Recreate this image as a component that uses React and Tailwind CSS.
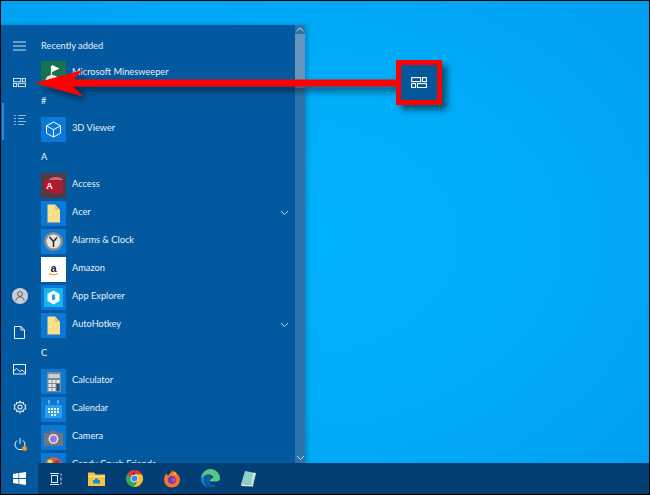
import React from "react";

const font = { fontFamily: 'Lato,"Open Sans",sans-serif' };

function Folder() {
  return (
    <svg width="25" height="25" viewBox="0 0 25 25">
      <rect width="25" height="25" fill="#0a78d6" />
      <path d="M6.500 3.500h7.500l5 5.500v12.500H6.500z" fill="#fbe08c" />
      <path d="M14 3.500l5 5.500h-5z" fill="#e9c565" />
    </svg>
  );
}
function Cube() {
  return (
    <svg width="25" height="25" viewBox="0 0 25 25" fill="none" stroke="#fff" strokeWidth="1">
      <rect width="25" height="25" fill="#0a78d6" stroke="none" />
      <path d="M12.500 5l7 3.800v7.400l-7 3.800-7-3.800V8.800zM5.500 8.800l7 3.900 7-3.900M12.500 12.700V20" />
    </svg>
  );
}
function AccessIcon() {
  return (
    <svg width="25" height="25" viewBox="0 0 25 25">
      <rect width="25" height="25" fill="#523a42" />
      <ellipse cx="15" cy="7" rx="7" ry="3" fill="#d9647a" />
      <path d="M8 7h14v11c0 2-3.500 3-7 3s-7-1-7-3z" fill="#a81c34" />
      <rect x="3" y="7" width="11" height="11" fill="#b7162e" />
      <text x="8.500" y="16" fontSize="9" fontWeight="700" fill="#fff" textAnchor="middle" fontFamily="Liberation Sans">A</text>
    </svg>
  );
}
function ClockIcon() {
  return (
    <svg width="25" height="25" viewBox="0 0 25 25">
      <rect width="25" height="25" fill="#0a78d6" />
      <circle cx="12.500" cy="12.500" r="9.500" fill="#8a8d90" />
      <circle cx="12.500" cy="12.500" r="7" fill="#e4e4e0" />
      <path d="M8.500 8l4 4.500 3.500-4M12.500 12.500V18" stroke="#2a2a2a" strokeWidth="1.500" fill="none" />
    </svg>
  );
}
function AmazonIcon() {
  return (
    <svg width="25" height="25" viewBox="0 0 25 25">
      <rect width="25" height="25" fill="#fff" />
      <text x="12.500" y="14.500" fontSize="11" fontWeight="700" fill="#222" textAnchor="middle" fontFamily="Liberation Sans">a</text>
      <path d="M8 16.500c3 1.800 6 1.800 9 0" stroke="#f39a1f" strokeWidth="1.200" fill="none" />
    </svg>
  );
}
function ExplorerIcon() {
  return (
    <svg width="25" height="25" viewBox="0 0 25 25">
      <rect width="25" height="25" fill="#0a78d6" />
      <rect x="3" y="3" width="19" height="19" fill="#18b4ee" />
      <path d="M12.500 5.500l6 3.500v7l-6 3.500-6-3.500V9z" fill="#fff" />
      <path d="M11 9.500h2.500l1 1.500-1 1 1 1.200-1 1.800H11z" fill="#18a5e4" />
    </svg>
  );
}
function CalcIcon() {
  return (
    <svg width="25" height="25" viewBox="0 0 25 25">
      <rect width="25" height="25" fill="#0a78d6" />
      <rect x="6" y="3" width="14" height="20" fill="#7d8a94" />
      <rect x="7.500" y="5" width="11" height="4" fill="#c3d3dc" />
      <path d="M7.500 11h3v3h-3zM11.500 11h3v3h-3zM7.500 15h3v3h-3zM11.500 15h3v3h-3zM7.500 19h3v3h-3zM11.500 19h3v3h-3z" fill="#e6ebee" />
      <rect x="15.500" y="15" width="3" height="7" fill="#1f4d86" />
      <rect x="15.500" y="11" width="3" height="3" fill="#e6ebee" />
    </svg>
  );
}
function CalendarIcon() {
  return (
    <svg width="25" height="25" viewBox="0 0 25 25">
      <rect width="25" height="25" fill="#0a78d6" />
      <rect x="4" y="5" width="17" height="16" fill="#2aa0ec" />
      <path d="M4 5h17v3H4z" fill="#1175c9" />
      <path d="M8 3v4M17 3v4" stroke="#bfe0f6" strokeWidth="1" />
      <path d="M7 11h2v2H7zM10 11h2v2h-2zM13 11h2v2h-2zM16 11h2v2h-2zM7 14h2v2H7zM10 14h2v2h-2zM13 14h2v2h-2zM16 14h2v2h-2zM10 17h2v2h-2zM13 17h2v2h-2z" fill="#eaf6fe" />
    </svg>
  );
}
function CameraIcon() {
  return (
    <svg width="25" height="25" viewBox="0 0 25 25">
      <rect width="25" height="25" fill="#0a78d6" />
      <path d="M3 8h5l2-2.500h5L17 8h5v13H3z" fill="#70757c" />
      <circle cx="12.500" cy="14" r="5" fill="#e8e8ee" />
      <circle cx="12.500" cy="14" r="3.500" fill="#9a76e0" />
    </svg>
  );
}
function MineIcon() {
  return (
    <svg width="25" height="25" viewBox="0 0 25 25">
      <rect width="25" height="25" fill="#17734e" />
      <path d="M10.500 5v11" stroke="#fff" strokeWidth="1.200" />
      <path d="M11 4l7.500 3.500L11 11z" fill="#fff" />
      <path d="M4.500 20c0-4 3-6 6.500-6s6.500 2 6.500 6z" fill="#dfe9df" />
    </svg>
  );
}
function CandyIcon() {
  return (
    <svg width="25" height="25" viewBox="0 0 25 25">
      <rect width="25" height="25" fill="#0a78d6" />
      <circle cx="12.500" cy="13" r="9" fill="#c46b3b" />
      <circle cx="9" cy="9" r="2.500" fill="#f4d35e" />
      <circle cx="16" cy="10" r="3" fill="#c52a55" />
      <circle cx="10" cy="16" r="3" fill="#3ca14e" />
    </svg>
  );
}

function Chevron() {
  return (
    <svg width="9" height="6" viewBox="0 0 9 6" fill="none" stroke="#bcd8ec" strokeWidth="1">
      <path d="M1 1l3.500 3.500L8 1" />
    </svg>
  );
}

function Row({ icon, label, chevron }) {
  return (
    <div className="flex h-[28px] shrink-0 items-center">
      <div className="h-[25px] w-[25px] shrink-0">{icon}</div>
      <span className="ml-[6px] flex-1 whitespace-nowrap pb-[2px] text-[9.25px] text-[#e6f1f9]">{label}</span>
      {chevron && (
        <span className="mr-[6px] flex">
          <Chevron />
        </span>
      )}
    </div>
  );
}

function Head({ children, first }) {
  return (
    <div className={`flex shrink-0 items-center text-[9.25px] text-[#e6f1f9] ${first ? "h-[26px]" : "h-[28px]"}`}>
      {children}
    </div>
  );
}

function Tiles({ stroke = "#e8f2fa", size = 13 }) {
  return (
    <svg width={size} height={size * 0.7} viewBox="0 0 16 11.200" fill="none" stroke={stroke} strokeWidth="1.100">
      <rect x="0.600" y="0.600" width="9" height="4" />
      <rect x="11.500" y="0.600" width="3.900" height="4" />
      <rect x="0.600" y="6.600" width="3.900" height="4" />
      <rect x="6.500" y="6.600" width="8.900" height="4" />
    </svg>
  );
}

const rail = "flex h-[37px] w-full items-center justify-center";

function Rail() {
  return (
    <div className="relative flex h-full w-[37px] shrink-0 flex-col">
      <div className="absolute left-[1px] top-[78px] h-[37px] w-[2px] bg-[#1c8fe6]" />
      <div className="flex h-[42px] items-center justify-center">
        <svg width="13" height="10" viewBox="0 0 13 10" stroke="#cfe2f1" strokeWidth="1">
          <path d="M0 1h13M0 5h13M0 9h13" />
        </svg>
      </div>
      <div className="flex h-[32px] items-center justify-center">
        <Tiles />
      </div>
      <div className="flex h-[42px] items-center justify-center">
        <svg width="12" height="13" viewBox="0 0 12 13" stroke="#8fbad9" strokeWidth="1" fill="none">
          <path d="M0 1.500h2M0 4.500h2M0 7.500h2M0 10.500h2M4 1.500h8M4 4.500h6M4 7.500h8M4 10.500h6" />
        </svg>
      </div>
      <div className="flex-1" />
      <div className={rail}>
        <svg width="16" height="16" viewBox="0 0 16 16" fill="none">
          <circle cx="8" cy="8" r="8" fill="#c9cdd0" />
          <circle cx="8" cy="6" r="2.400" stroke="#55606a" strokeWidth="1" />
          <path d="M3.800 12.500c.6-2.500 2.200-3.600 4.200-3.600s3.600 1.100 4.200 3.600" stroke="#55606a" strokeWidth="1" />
        </svg>
      </div>
      <div className={rail}>
        <svg width="11" height="13" viewBox="0 0 11 13" fill="none" stroke="#e8f2fa" strokeWidth="1">
          <path d="M.5.500h6.500l3.500 3.500v8.500H.5zM7 .5V4h3.500" />
        </svg>
      </div>
      <div className={rail}>
        <svg width="13" height="11" viewBox="0 0 13 11" fill="none" stroke="#e8f2fa" strokeWidth="1">
          <rect x=".5" y=".5" width="12" height="9.500" />
          <path d="M.5 7l3-2.500 3.500 3 2-1.500 3.500 3" />
        </svg>
      </div>
      <div className={rail}>
        <svg width="14" height="14" viewBox="0 0 24 24" fill="none" stroke="#e8f2fa" strokeWidth="1.800">
          <circle cx="12" cy="12" r="3.500" />
          <path d="M12 2l2 3 3.500-.8 1 3.400 3.300 1.200-1 3.200 1 3.200-3.300 1.200-1 3.400-3.500-.8-2 3-2-3-3.500.8-1-3.400-3.300-1.200 1-3.200-1-3.200 3.300-1.200 1-3.400 3.500.8z" />
        </svg>
      </div>
      <div className="relative flex h-[38px] w-full items-center justify-center">
        <svg width="12" height="13" viewBox="0 0 12 13" fill="none" stroke="#e8f2fa" strokeWidth="1">
          <path d="M6 0v6M3.200 2.500a5 5 0 1 0 5.600 0" />
        </svg>
        <span className="absolute left-[21px] top-[21px] h-[5px] w-[5px] rounded-full bg-[#f7931e]" />
      </div>
    </div>
  );
}

function Scrollbar() {
  return (
    <div className="flex h-full w-[10px] shrink-0 flex-col bg-[#2a74ab]">
      <div className="flex h-[9px] items-center justify-center">
        <svg width="8" height="5" viewBox="0 0 8 5" fill="none" stroke="#b9d3e6" strokeWidth="1">
          <path d="M.5 4L4 1l3.500 3" />
        </svg>
      </div>
      <div className="h-[54px] bg-[#6596bd]" />
      <div className="flex-1" />
      <div className="flex h-[11px] items-center justify-center">
        <Chevron />
      </div>
    </div>
  );
}

function Windows() {
  return (
    <svg width="13" height="13" viewBox="0 0 13 13" fill="#fff">
      <path d="M0 1.900l5.500-.8v5H0zM6.200 1l6.800-1v6.100H6.200zM0 6.900h5.500v5L0 11.100zM6.200 6.900H13V13l-6.800-1z" />
    </svg>
  );
}

function Taskbar() {
  return (
    <div className="flex h-[31px] shrink-0 items-center bg-[#033f75]">
      <div className="flex h-full w-[37px] items-center justify-center bg-[#03579a]">
        <Windows />
      </div>
      <div className="flex w-[36px] justify-center">
        <svg width="14" height="12" viewBox="0 0 14 12" fill="none" stroke="#dbe6ef" strokeWidth="1">
          <rect x="2.500" y="2.500" width="6" height="7" />
          <path d="M1 .5h9M1 11.500h9M12 .5v2M12 4.500v3M12 9.500v2" />
        </svg>
      </div>
      <div className="ml-[3px] flex w-[38px] justify-center">
        <svg width="17" height="14" viewBox="0 0 17 14">
          <path d="M0 .5h6l1.500 2H17V14H0z" fill="#f4c542" />
          <path d="M0 4h17v1H0z" fill="#fde58a" />
          <rect x="5" y="8" width="7" height="3.500" fill="#1b88d4" />
          <rect x="7" y="6.500" width="3" height="2" fill="#1b88d4" />
        </svg>
      </div>
      <div className="flex w-[38px] justify-center">
        <svg width="17" height="17" viewBox="0 0 24 24">
          <path d="M12 12L12 0A12 12 0 0 1 22.400 6z" fill="#e53935" />
          <path d="M12 0A12 12 0 0 0 1.600 6L7 15z" fill="#e53935" />
          <path d="M1.600 6A12 12 0 0 0 11 24l5-9z" fill="#3aa757" />
          <path d="M22.400 6H12l4.500 9L11 24A12 12 0 0 0 22.400 6z" fill="#fbc02d" />
          <circle cx="12" cy="12" r="5.400" fill="#fff" />
          <circle cx="12" cy="12" r="4.300" fill="#3f83e6" />
        </svg>
      </div>
      <div className="flex w-[38px] justify-center">
        <svg width="18" height="18" viewBox="0 0 18 18">
          <path d="M9.500 0l1.800 3C14.500 3.500 17 6 17 9.500 17 14 13.500 17.500 9 17.500S1 14 1 9.500C1 7 2 5 3.500 3.500L5 6c1-1.500 3-3 4.500-6z" fill="#f6762a" />
          <path d="M11 1l3 3-3 1z" fill="#fcc419" />
          <circle cx="9" cy="10" r="4" fill="#6d3db5" />
          <circle cx="10.500" cy="10" r="2" fill="#d9478f" />
        </svg>
      </div>
      <div className="flex w-[38px] justify-center">
        <svg width="19" height="19" viewBox="0 0 19 19">
          <path d="M9.500 0a9.500 9.500 0 0 1 9.500 9.500c0 1.800-1.500 3-4 3H9c0-2.500 2-4 3.500-3.500C11.500 6 9 5 6.500 5.500 3.500 6 1 8 0 10 0 4.500 4.200 0 9.500 0z" fill="#58c785" />
          <path d="M0 10c1-2 3.500-4 6.500-4.500C3 7 2.500 12 4.500 15.500c1.500 2.500 4 3.500 6.500 3.500C5 19 .3 15.500 0 10z" fill="#137fd0" />
          <path d="M6.500 5.500C4 7.500 3.500 12 5.500 15c1.500 2.300 5 4 8.500 2.500l1-2c-2 1-5.500 1-6.500-1.500C8 12.800 8.500 11 10 10l-.7-4z" fill="#0e5ea8" />
        </svg>
      </div>
      <div className="flex w-[38px] justify-center">
        <svg width="17" height="17" viewBox="0 0 17 17">
          <path d="M5 1l11 2-3 12-12-1z" fill="#8fd0c5" />
          <path d="M13 3l3 0-3 12-2-.3z" fill="#d7ddd4" />
          <path d="M1 14l12 1 .5 1.500L1.500 16z" fill="#e8ece6" />
        </svg>
      </div>
    </div>
  );
}

function Overlay() {
  return (
    <>
      <svg className="absolute left-[34px] top-[55px]" width="370" height="55" viewBox="0 0 370 55">
        <defs>
          <filter id="s" x="-5%" y="-30%" width="110%" height="170%">
            <feDropShadow dx="5" dy="5" stdDeviation="3" floodColor="#000" floodOpacity="0.45" />
          </filter>
        </defs>
        <path d="M1 28L49 15l-10 9.500H365v7H39l10 10z" fill="#ff0000" filter="url(#s)" />
      </svg>
      <div className="absolute left-[396px] top-[60px] flex h-[45px] w-[46px] items-center justify-center border-[5px] border-[#ff0000] bg-[#03579a] shadow-[5px_5px_6px_rgba(0,0,0,0.5)]">
        <Tiles size={16} stroke="#ffffff" />
      </div>
    </>
  );
}

export default function App() {
  return (
    <div className="relative h-[495px] w-[650px] overflow-hidden bg-black p-[1px]" style={font}>
      <div className="flex h-[493px] w-full flex-col bg-[radial-gradient(ellipse_at_45%_48%,#00b2fe_0%,#00acf8_50%,#009eee_100%)]">
        <div className="h-[24px] shrink-0" />
        <div className="flex min-h-0 flex-1">
          <div className="flex h-full w-[304px] bg-[#03599f] shadow-[2px_0_5px_rgba(0,50,100,0.3)]">
            <Rail />
            <div className="flex h-full min-w-0 flex-1 flex-col overflow-hidden pl-[3px] pt-[8px]">
              <Head first>Recently added</Head>
              <Row icon={<MineIcon />} label="Microsoft Minesweeper" />
              <Head>#</Head>
              <Row icon={<Cube />} label="3D Viewer" />
              <Head>A</Head>
              <Row icon={<AccessIcon />} label="Access" />
              <Row icon={<Folder />} label="Acer" chevron />
              <Row icon={<ClockIcon />} label="Alarms & Clock" />
              <Row icon={<AmazonIcon />} label="Amazon" />
              <Row icon={<ExplorerIcon />} label="App Explorer" />
              <Row icon={<Folder />} label="AutoHotkey" chevron />
              <Head>C</Head>
              <Row icon={<CalcIcon />} label="Calculator" />
              <Row icon={<CalendarIcon />} label="Calendar" />
              <Row icon={<CameraIcon />} label="Camera" />
              <Row icon={<CandyIcon />} label="Candy Crush Friends" />
            </div>
            <Scrollbar />
          </div>
          <div className="flex-1" />
        </div>
        <Taskbar />
      </div>
      <Overlay />
    </div>
  );
}
